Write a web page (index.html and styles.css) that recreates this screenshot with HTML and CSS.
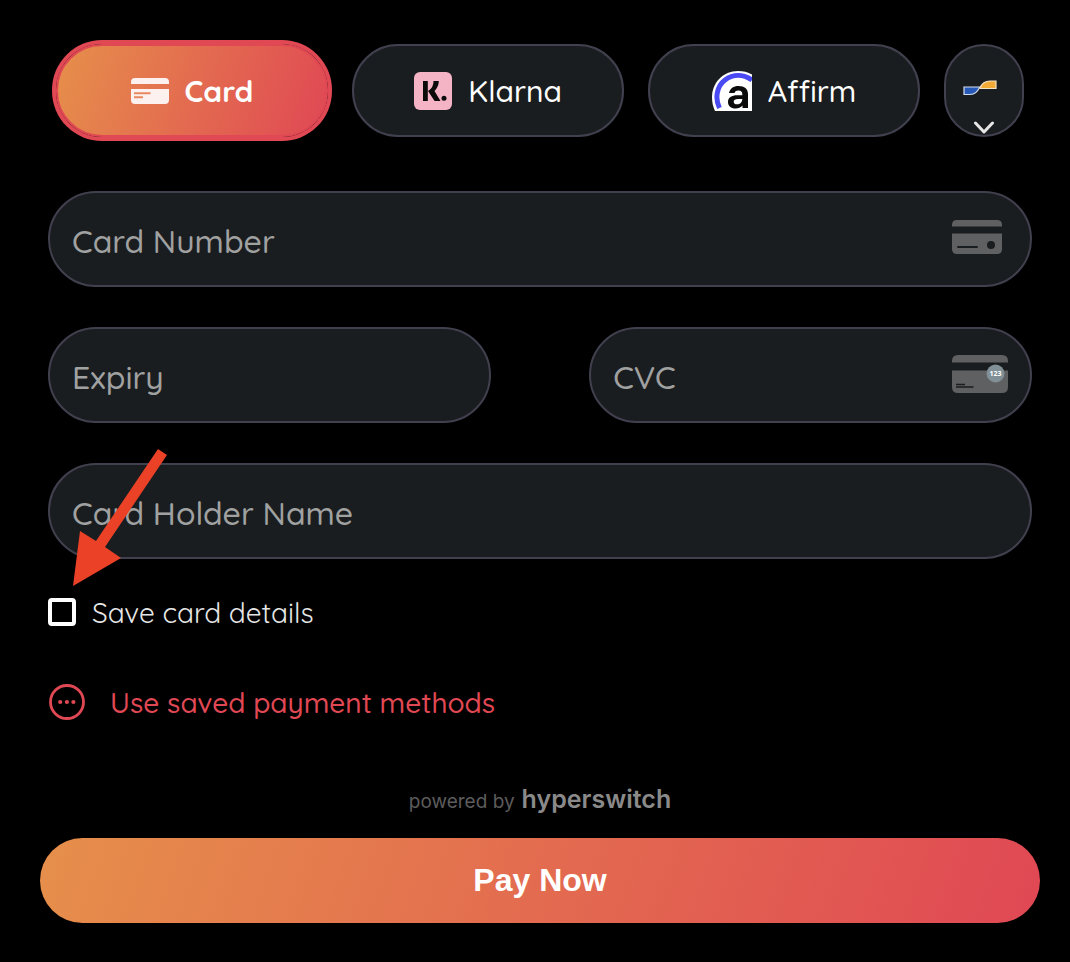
FILE: index.html
```
<!DOCTYPE html>
<html lang="en">
<head>
<meta charset="utf-8">
<meta name="viewport" content="width=device-width, initial-scale=1">
<title>Payment</title>
<link rel="stylesheet" href="styles.css">
</head>
<body>
<form class="checkout">
  <div class="methods">
    <button type="button" class="method method-active" aria-pressed="true">
      <svg class="method-icon" viewBox="0 0 38 38" aria-hidden="true">
        <path fill="#fdf1ef" d="M0 12V10Q0 6 4 6H34Q38 6 38 10V12ZM0 17H38V28Q38 32 34 32H4Q0 32 0 28Z"/>
        <path fill="#e8885f" d="M3 20.300H19.500V22.200H3ZM3 24.200H12V26.200H3Z"/>
      </svg>
      <span>Card</span>
    </button>
    <button type="button" class="method">
      <svg class="method-icon" viewBox="0 0 38 38" aria-hidden="true">
        <rect width="38" height="38" rx="6" fill="#f5b4c6"/>
        <path fill="#0b0b0b" d="M9 9H13.800V29H9ZM19.500 9H24.800C24.800 13 23 16.500 20.500 19L26.500 29H20.600L14 19C18 16.800 19.500 13 19.500 9Z"/>
        <circle cx="30" cy="26.300" r="2.500" fill="#0b0b0b"/>
      </svg>
      <span>Klarna</span>
    </button>
    <button type="button" class="method">
      <svg class="method-icon method-icon-affirm" viewBox="0 0 40 40" aria-hidden="true">
        <path fill="#fff" d="M40 3.500C36 1 31 0 26 0C11 0 0 12 0 26C0 31 1 36 3 40H40Z"/>
        <path fill="none" stroke="#4a4af4" stroke-width="5" d="M7.500 37C2.500 27 5 15 13 9C21 3 31 3 40 9"/>
        <path fill="#0b0b0b" d="M17 22C18 17.500 21.500 15 26.500 15C32.500 15 36 17.800 36 23V37H30.500V34.500C28.800 36.500 26.500 37.500 23.500 37.500C19 37.500 16 35 16 31C16 26.500 19.500 24.300 25.500 24.300H30.300V23C30.300 20.700 29 19.500 26.500 19.500C24.300 19.500 23 20.300 22.500 22ZM30.300 28H26C23.200 28 21.700 28.900 21.700 30.700C21.700 32.400 23 33.300 25 33.300C28.200 33.300 30.300 31.300 30.300 28Z"/>
      </svg>
      <span>Affirm</span>
    </button>
    <button type="button" class="method-more" aria-label="More payment methods">
      <svg class="wave" viewBox="0 0 34 16" aria-hidden="true">
        <path fill="#2659b8" stroke="#d5ddec" stroke-width="1.200" d="M1 7H17C14 12 12 14.500 7 14.500H1Z"/>
        <path fill="#f2ab37" stroke="#f3e3c6" stroke-width="1.200" d="M17 8C19 3 22 1 27 1H33V8.500H17Z"/>
      </svg>
      <svg class="chevron" viewBox="0 0 20 13" aria-hidden="true">
        <path fill="none" stroke="#e6e6e6" stroke-width="3" stroke-linecap="round" stroke-linejoin="round" d="M1.500 2L10 11L18.500 2"/>
      </svg>
    </button>
  </div>

  <div class="fields">
    <label class="field field-wide">
      <input class="field-input" type="text" placeholder="Card Number" aria-label="Card Number" inputmode="numeric">
      <svg class="icon-card" viewBox="0 0 52 36" aria-hidden="true">
        <path fill="#5f6061" d="M1 7.500V6Q1 1 6 1H46Q51 1 51 6V7.500ZM1 14.500H51V30Q51 35 46 35H6Q1 35 1 30Z"/>
        <path stroke="#1a1d1f" stroke-width="2" stroke-linecap="round" d="M7 28H26"/>
        <circle cx="40" cy="26" r="4" fill="#1a1d1f"/>
      </svg>
    </label>
    <label class="field">
      <input class="field-input" type="text" placeholder="Expiry" aria-label="Expiry" inputmode="numeric">
    </label>
    <label class="field">
      <input class="field-input" type="text" placeholder="CVC" aria-label="CVC" inputmode="numeric">
      <svg class="icon-cvc" viewBox="0 0 57 40" aria-hidden="true">
        <path fill="#5f6061" d="M1 8.500V7Q1 1 7 1H51Q57 1 57 7V8.500ZM1 16.500H57V33Q57 39 51 39H7Q1 39 1 33Z"/>
        <path stroke="#1a1d1f" stroke-width="1.500" d="M5 30.500H14M5 33H22.500"/>
        <circle cx="44.500" cy="19.500" r="9" fill="#819097"/>
        <text class="cvc-digits" x="44.500" y="22" text-anchor="middle">123</text>
      </svg>
    </label>
    <label class="field field-wide">
      <input class="field-input" type="text" placeholder="Card Holder Name" aria-label="Card Holder Name">
    </label>
  </div>

  <label class="save">
    <input class="save-box" type="checkbox">
    <span>Save card details</span>
  </label>

  <a class="saved-link" href="#saved">
    <svg class="saved-icon" viewBox="0 0 38 38" aria-hidden="true">
      <circle cx="19" cy="19" r="16.500" fill="none" stroke="#e04854" stroke-width="2.800"/>
      <circle cx="12.200" cy="19" r="2.100" fill="#e04854"/>
      <circle cx="18.900" cy="19" r="2.100" fill="#e04854"/>
      <circle cx="25.400" cy="19" r="2.100" fill="#e04854"/>
    </svg>
    <span>Use saved payment methods</span>
  </a>

  <p class="powered">powered by <strong class="brand">hyperswitch</strong></p>
  <button type="submit" class="pay">Pay Now</button>

  <svg class="pointer" viewBox="0 0 96 138" aria-hidden="true">
    <path fill="#eb4127" d="M86 1L95 7L33 99L49 110L1 138L8 83L24 93Z"/>
  </svg>
</form>
</body>
</html>
```
FILE: styles.css
```
* {
  box-sizing: border-box;
}

body {
  margin: 0;
  background: #000;
  color: #fff;
  font-family: Quicksand, Lato, "Liberation Sans", sans-serif;
}

button,
input {
  font-family: inherit;
}

.checkout {
  position: relative;
  display: flex;
  flex-direction: column;
  padding: 44px 30px 39px 40px;
}

.methods {
  display: flex;
  gap: 24px;
  padding: 0 16px;
}

.method,
.method-more {
  height: 93px;
  border: 2px solid #41404f;
  background: #1a1d1f;
  color: #fff;
}

.method {
  flex: 1;
  display: flex;
  align-items: center;
  justify-content: center;
  gap: 16px;
  padding: 0;
  border-radius: 46px;
  font-size: 30px;
  font-weight: 500;
}

.method-active {
  border-color: #e04854;
  background: linear-gradient(109deg, #e68f4b, #e04854);
  box-shadow: 0 0 0 4px #e04854;
  font-weight: 700;
}

.method-icon {
  width: 38px;
  height: 38px;
}

.method-icon-affirm {
  width: 40px;
  height: 40px;
}

.method-more {
  width: 80px;
  display: flex;
  flex-direction: column;
  align-items: center;
  gap: 25px;
  padding: 34px 0 0;
  border-radius: 40px;
}

.wave {
  width: 34px;
  height: 16px;
  margin-right: 8px;
}

.chevron {
  width: 20px;
  height: 13px;
  flex: none;
}

.fields {
  display: grid;
  grid-template-columns: repeat(2, minmax(0, 1fr));
  gap: 40px 10%;
  margin: 54px 0 39px;
  padding: 0 8px;
}

.field {
  display: flex;
  align-items: center;
  height: 96px;
  padding: 0 22px;
  border: 2px solid #41404f;
  border-radius: 48px;
  background: #1a1d1f;
}

.field-wide {
  grid-column: 1 / -1;
}

.field-input {
  flex: 1;
  min-width: 0;
  height: 92px;
  padding: 4px 0 0;
  border: 0;
  outline: 0;
  background: none;
  color: #fff;
  font-size: 32px;
  font-weight: 500;
}

.field-input::placeholder {
  color: #a0a1a1;
  opacity: 1;
}

.icon-card {
  width: 52px;
  height: 36px;
  margin: 0 5px 4px 0;
}

.icon-cvc {
  width: 57px;
  height: 40px;
  margin-bottom: 2px;
}

.cvc-digits {
  fill: #fff;
  font: 700 7px "Open Sans", sans-serif;
}

.save {
  display: flex;
  align-items: center;
  gap: 16px;
  height: 28px;
  padding: 0 8px;
  color: #e6e6e6;
  font-size: 28px;
}

.save-box {
  appearance: none;
  width: 28px;
  height: 28px;
  margin: 0;
  border: 4px solid #fff;
  border-radius: 4px;
}

.saved-link {
  display: flex;
  align-items: center;
  align-self: flex-start;
  gap: 24px;
  height: 38px;
  margin-top: 57px;
  padding: 0 8px;
  color: #e04854;
  font-size: 28px;
  font-weight: 500;
  text-decoration: none;
}

.saved-icon {
  width: 38px;
  height: 38px;
}

.powered {
  display: flex;
  align-items: baseline;
  justify-content: center;
  gap: 7px;
  margin: 60px 0 18px;
  color: #5c5c5c;
  font: 400 19px/36px Inter, sans-serif;
}

.brand {
  color: #8a8a8a;
  font-size: 25px;
  font-weight: 600;
}

.pay {
  height: 85px;
  border: 0;
  border-radius: 43px;
  background: linear-gradient(109deg, #e68f4b, #e04854);
  color: #fff;
  font: 700 32px "Liberation Sans", Arial, sans-serif;
}

.pointer {
  position: absolute;
  left: 72px;
  top: 448px;
  width: 96px;
  height: 138px;
  pointer-events: none;
}
```
